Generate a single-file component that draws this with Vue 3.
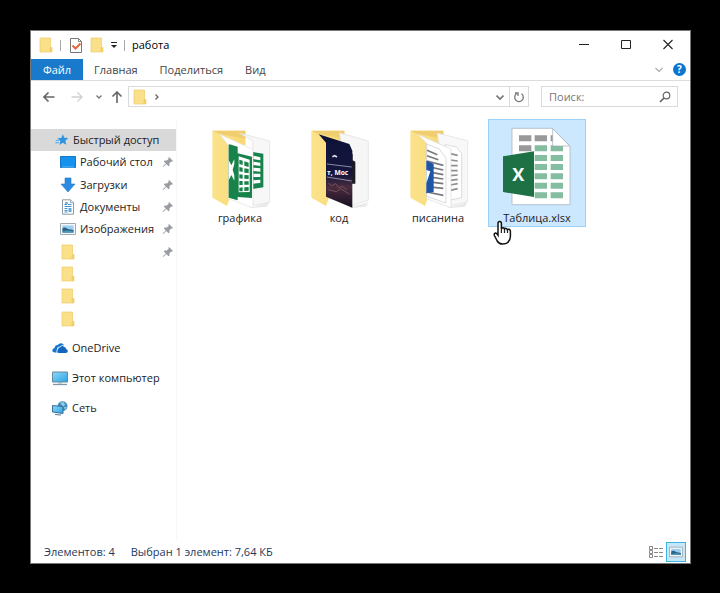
<script setup>
import { ref } from 'vue'

const tabs = ['Главная', 'Поделиться', 'Вид']
const quick = [
  { name: 'Рабочий стол', icon: 'desktop', pinned: true },
  { name: 'Загрузки', icon: 'download', pinned: true },
  { name: 'Документы', icon: 'document', pinned: true },
  { name: 'Изображения', icon: 'picture', pinned: true },
  { name: '', icon: 'folder', pinned: true },
  { name: '', icon: 'folder', pinned: false },
  { name: '', icon: 'folder', pinned: false },
  { name: '', icon: 'folder', pinned: false }
]
const roots = [
  { name: 'OneDrive', icon: 'cloud' },
  { name: 'Этот компьютер', icon: 'computer' },
  { name: 'Сеть', icon: 'network' }
]
const files = [
  { name: 'графика', icon: 'f-sheets' },
  { name: 'код', icon: 'f-code', mark: { text: 'т, Мос', x: 131, y: 164, size: 20 } },
  { name: 'писанина', icon: 'f-docs' },
  { name: 'Таблица.xlsx', icon: 'xlsx', mark: { text: 'X', x: 79, y: 182, size: 54 } }
]
const selected = ref(3)
const query = ref('')
</script>

<template>
  <svg class="sprite" aria-hidden="true">
    <defs>
      <linearGradient id="gold" x1="0" y1="0" x2="1" y2="0">
        <stop offset="0" stop-color="#fbe38d" /><stop offset="1" stop-color="#f8d873" />
      </linearGradient>
      <linearGradient id="night" x1="0" y1="0" x2="0" y2="1">
        <stop offset="0" stop-color="#0d1138" /><stop offset="0.55" stop-color="#15163d" />
        <stop offset="0.72" stop-color="#4a2c3f" /><stop offset="1" stop-color="#150f20" />
      </linearGradient>
      <linearGradient id="screen" x1="0" y1="0" x2="1" y2="1">
        <stop offset="0" stop-color="#8ed8f8" /><stop offset="1" stop-color="#2ba3e4" />
      </linearGradient>
    </defs>
    <symbol id="folder" viewBox="0 0 16 16">
      <path d="M2 1h10.500v9.500H14V15H2z" fill="#fbe08a" stroke="#edcb69" stroke-width=".7" />
      <path d="M12.500 1v9l-1 1v4H14v-4.500h-1.500z" fill="#f2cd68" />
    </symbol>
    <symbol id="star" viewBox="0 0 16 16">
      <path d="M9 1.500l1.700 4 4.500.3-3.400 3 1.100 4.600-4-2.400-3.800 2.600 1-4.700-3.600-2.900 4.600-.4z" fill="#2d93e0" />
      <path d="M1 8.500h4M.5 11h4" stroke="#5aaeea" stroke-width="1.200" />
    </symbol>
    <symbol id="desktop" viewBox="0 0 16 16">
      <path d="M.5 2.500h15v11H.5z" fill="#1592ee" stroke="#1878c4" />
      <path d="M2 13h12" stroke="#62bbfb" />
    </symbol>
    <symbol id="download" viewBox="0 0 16 16">
      <path d="M5 1h6v6h4l-7 8-7-8h4z" fill="#2c8be0" stroke="#2478c8" stroke-width=".6" />
    </symbol>
    <symbol id="document" viewBox="0 0 16 16">
      <path d="M2.500.8h8l3 3v11.400h-11z" fill="#fff" stroke="#8b9aa5" />
      <path d="M10.500.8v3h3" fill="#dce6ec" stroke="#8b9aa5" stroke-width=".8" />
      <path d="M4.500 5.500h2.500M8 5.500h3.500M4.500 7.500h7M4.500 9.500h3M4.500 11.500h3M4.500 13h3" stroke="#3e93cf" />
      <path d="M8.500 9h3v4h-3z" fill="#5ca8dc" /><path d="M5 3h3v2H5z" fill="#73b8e5" />
    </symbol>
    <symbol id="picture" viewBox="0 0 16 16">
      <path d="M.5 2.500h15v11H.5z" fill="#f4f6f7" stroke="#a1aab0" />
      <path d="M2.500 4.500h11v7h-11z" fill="#9bcdf0" /><path d="M2.500 7q3-1.500 5.500 1l5.500 1v2.500h-11z" fill="#2d6285" />
      <path d="M2.500 10.500q5.500-2 11 0v1h-11z" fill="#4b96ba" />
    </symbol>
    <symbol id="cloud" viewBox="0 0 16 16">
      <path d="M5.500 10.500Q6 7.500 8.500 7.300 10 4.800 12.300 7 14 7 14 9q2 .5 1.800 2.300-.3 1.700-1.900 1.700H6.700q-2 0-1.200-2.500z" fill="#1266bd" />
      <path d="M4.800 12.500H2.300Q.2 12 .3 10.200.6 8.300 2.500 8 3 4.800 5.800 4.900 7.200 3 9.300 3.200 11.500 3.500 12 5.500 9.700 4.800 8.300 6.500 5 6.700 4.800 10q-.8 1.200 0 2.500z" fill="#1478cf" />
    </symbol>
    <symbol id="computer" viewBox="0 0 16 16">
      <path d="M.5 2h15v10H.5z" fill="url(#screen)" stroke="#66899e" /><path d="M6 12h4v1.500H6z" fill="#9eb1bc" />
      <path d="M1 14.500h14" stroke="#8298a6" stroke-width="1.300" />
    </symbol>
    <symbol id="network" viewBox="0 0 16 16">
      <circle cx="10.500" cy="6.200" r="5" fill="#468bb9" /><path d="M8 2.500l4-.5 1 3-2 2zM12 7l3 0-2 3z" fill="#8acbe8" />
      <path d="M.5 5.500l10.500 1v7L.5 12z" fill="url(#screen)" stroke="#386e97" /><path d="M3 14.500l6 .5" stroke="#547994" />
    </symbol>
    <symbol id="pin" viewBox="0 0 12 12">
      <path d="M7 1l4 4-1 .8-.8-.3L7.500 7.300v2.200l-1 .8L4.300 8 1.500 10.800l-.8.2.3-.9L3.800 7.400 1.800 5.500l.9-1h2.200l1.800-1.700-.4-.8z" fill="#999da1" />
    </symbol>
    <symbol id="open-folder" viewBox="0 0 270 264">
      <path d="M155 264l62-17-7 13-44 4z" fill="#e9e9e9" />
      <path d="M46 32h99v70L90 258l-44-25z" fill="url(#gold)" />
      <path d="M46 32h99v24L65 41z" fill="#f0ce70" />
    </symbol>
    <symbol id="f-sheets" viewBox="-6 0 270 264">
      <use href="#open-folder" width="270" height="264" />
      <path d="M126 39l92 24v184l-51 9V62z" fill="#f7f7f7" stroke="#dedede" stroke-width="2" />
      <path d="M167 96l32 5v101l-32 5z" fill="#18834d" />
      <path d="M169 107l21 5v9l-21-4zM169 125l21 3v10l-21-3zM169 143l21 2v10l-21-2zM169 161h21v10h-21zM169 181l21-2v10l-21 2z" fill="#fff" />
      <path d="M68 43l100 45v176l-73-28V77z" fill="#fff" stroke="#e1e1e1" stroke-width="2" />
      <path d="M98 73l24 7v20l43 10v124l-43-3v10l-27-8V74z" fill="#178249" />
      <path d="M125 109l33 10v97l-33 1z" fill="#fff" />
      <path d="M127 119l10 3v13l-10-3zm15 5l13 4v13l-13-4zM127 141l10 2v13l-10-2zm15 4l13 2v12l-13-1zM127 163l10 1v12l-10-1zm15 2l13 1v11l-13-1zM127 183h10v12h-10zm15 1h13v10h-13zM127 203l10-1v12h-10zm15-1l13-1v11l-13 1z" fill="#178249" />
      <path d="M95 120l8 16 9-18v14l-5 17 5 17v16l-9-17-8 16z" fill="#fff" />
    </symbol>
    <symbol id="f-code" viewBox="-6 0 270 264">
      <use href="#open-folder" width="270" height="264" />
      <path d="M130 38l87 25v178l-52 16z" fill="#f6f6f6" stroke="#ddd" stroke-width="2" />
      <path d="M160 98l10 4v19l8 4v66h-18z" fill="#1b1b20" />
      <path d="M68 43l92 29 9 20v171l-79-33V68z" fill="url(#night)" />
      <path d="M93 132l74 9M93 171l74 12" stroke="#c5c5d0" stroke-width="2" />
      <path d="M109 110l7-3 7 4" fill="none" stroke="#dcdce8" stroke-width="5" />
      <path d="M97 190l10 7 12-6 9 12 12-4 13 11M97 209l24 6 13-9 27 17" fill="none" stroke="#79505a" stroke-width="3" />
    </symbol>
    <symbol id="f-docs" viewBox="-6 0 270 264">
      <use href="#open-folder" width="270" height="264" />
      <path d="M126 39l92 23v183l-51 12z" fill="#f8f8f8" stroke="#dedede" stroke-width="2" />
      <path d="M150 74l34 7 16 18v134l-38 8z" fill="#fff" stroke="#ccc" stroke-width="2" />
      <path d="M166 101l22 5m-22 14l22 3m-22 14h22m-22 15h22m-22 15l22-2m-22 16l22-3m-22 17l22-4m-22 20l22-5" stroke="#8f8f92" stroke-width="5" />
      <path d="M68 43l100 44v176l-73-27V70z" fill="#fff" stroke="#dadada" stroke-width="2" />
      <path d="M95 72l38 15 20 28v134l-58-20z" fill="#fff" stroke="#c9c9c9" stroke-width="2" />
      <path d="M96 91l31 13m-31 3l34 12m-34 4l49 13m-49 3l49 11m-49 5l49 9m-49 6l49 7m-49 8l49 6m-49 9l49 5m-49 11l49 10" stroke="#77777d" stroke-width="5" />
      <path d="M94 122l22 9v85l-22 4z" fill="#1f55a5" /><path d="M94 150v40l12-36z" fill="#fff" />
    </symbol>
    <symbol id="xlsx" viewBox="24 21 270 264">
      <path d="M84 46h121l53 53v176H84z" fill="#fff" stroke="#9eaab3" stroke-width="2" />
      <path d="M105 67h37v18h-37zm47 0h37v18h-37zm48 0h8v18h-8zM105 97h37v18h-37z" fill="#999" />
      <path d="M152 97h37v18h-37zm48 0h37v18h-37zM152 126h37v18h-37zm48 0h37v18h-37zM152 153h37v18h-37zm48 0h37v18h-37zM152 181h37v18h-37zm48 0h37v18h-37zM152 209h37v18h-37zm48 0h37v18h-37zM152 238h37v18h-37zm48 0h37v18h-37z" fill="#85bda0" />
      <path d="M206 47v52h51z" fill="#fff" stroke="#9eaab3" stroke-width="2" />
      <path d="M57 130l93-15v137l-93-15z" fill="#1d7145" />
    </symbol>
  </svg>

  <div class="backdrop">
    <main class="window">
      <header class="titlebar">
        <svg class="i16"><use href="#folder" /></svg>
        <span class="sep"></span>
        <button class="plain" aria-label="Свойства">
          <svg class="i16" viewBox="0 0 16 16">
            <path d="M2.500 1.500h8l3 3v11h-11z" fill="#fff" stroke="#777" /><path d="M10.500 1.500v3h3" fill="none" stroke="#888" />
            <path d="M4.500 8.500l3 3 5-5" fill="none" stroke="#e2683c" stroke-width="2" />
          </svg>
        </button>
        <button class="plain" aria-label="Новая папка"><svg class="i16"><use href="#folder" /></svg></button>
        <button class="plain" aria-label="Настройка панели">
          <svg class="i8" viewBox="0 0 8 8"><path d="M1 1.500h6" stroke="#222" /><path d="M1 4h6L4 7z" fill="#222" /></svg>
        </button>
        <span class="sep"></span>
        <h1>работа</h1>
        <div class="controls">
          <button class="plain" aria-label="Свернуть"><svg class="i12" viewBox="0 0 12 12"><path d="M1 5.500h10" stroke="#222" /></svg></button>
          <button class="plain" aria-label="Развернуть"><svg class="i12" viewBox="0 0 12 12"><path d="M1.500 1.500h9v8h-9z" fill="none" stroke="#222" /></svg></button>
          <button class="plain" aria-label="Закрыть"><svg class="i12" viewBox="0 0 12 12"><path d="M1.500 1l9 9M10.500 1l-9 9" stroke="#222" stroke-width="1.100" /></svg></button>
        </div>
      </header>

      <nav class="ribbon">
        <button class="tab file">Файл</button>
        <button v-for="t in tabs" :key="t" class="tab">{{ t }}</button>
        <span class="grow"></span>
        <button class="plain" aria-label="Развернуть ленту"><svg class="i8" viewBox="0 0 8 8"><path d="M.5 2L4 5.500 7.500 2" fill="none" stroke="#aaa" stroke-width="1.200" /></svg></button>
        <button class="help" aria-label="Справка">?</button>
      </nav>

      <div class="address">
        <button class="plain" aria-label="Назад"><svg class="i12" viewBox="0 0 12 12"><path d="M11.500 6H1M5.500 1.500L1 6l4.500 4.500" fill="none" stroke="#666" stroke-width="1.600" /></svg></button>
        <button class="plain fwd" aria-label="Вперёд"><svg class="i12" viewBox="0 0 12 12"><path d="M.5 6H11M6.500 1.500L11 6l-4.500 4.500" fill="none" stroke="#d0d0d0" stroke-width="1.300" /></svg></button>
        <button class="plain recent" aria-label="Недавние"><svg class="i8" viewBox="0 0 8 8"><path d="M1.500 2.500L4 5l2.500-2.500" fill="none" stroke="#777" stroke-width="1.300" /></svg></button>
        <button class="plain up" aria-label="Вверх"><svg class="i12" viewBox="0 0 12 12"><path d="M6 12V1M1.500 5.500L6 1l4.500 4.500" fill="none" stroke="#666" stroke-width="1.600" /></svg></button>
        <div class="path">
          <svg class="i16"><use href="#folder" /></svg>
          <svg class="i8" viewBox="0 0 8 8"><path d="M2.500 1.500L5 4 2.500 6.500" fill="none" stroke="#666" stroke-width="1.300" /></svg>
          <span class="grow"></span>
          <button class="plain" aria-label="Прежние расположения"><svg class="i8" viewBox="0 0 8 8"><path d="M.5 2.500L4 6l3.500-3.500" fill="none" stroke="#777" stroke-width="1.700" /></svg></button>
          <button class="plain refresh" aria-label="Обновить">
            <svg class="i12" viewBox="0 0 12 12"><path d="M3.500 2.800a4.300 4.300 0 1 0 5 0M2 2h3v3" fill="none" stroke="#777" stroke-width="1.300" /></svg>
          </button>
        </div>
        <label class="search">
          <input v-model="query" type="text" placeholder="Поиск:" aria-label="Поиск" />
          <svg class="i12" viewBox="0 0 12 12"><circle cx="7.500" cy="4.500" r="3.300" fill="none" stroke="#666" stroke-width="1.200" /><path d="M5 7l-4 4" stroke="#666" stroke-width="1.700" /></svg>
        </label>
      </div>

      <div class="body">
        <aside class="side">
          <div class="quick">
            <a href="#" class="row head"><svg class="i14"><use href="#star" /></svg><span>Быстрый доступ</span></a>
            <a v-for="(q, i) in quick" :key="i" href="#" class="row" :aria-label="q.name || 'Папка'">
              <svg class="i16"><use :href="'#' + q.icon" /></svg>
              <span class="grow">{{ q.name }}</span>
              <svg v-if="q.pinned" class="i12"><use href="#pin" /></svg>
            </a>
          </div>
          <div class="roots">
            <a v-for="r in roots" :key="r.name" href="#" class="root"><svg class="i16"><use :href="'#' + r.icon" /></svg><span>{{ r.name }}</span></a>
          </div>
        </aside>
        <section class="files" aria-label="Файлы">
          <button v-for="(f, i) in files" :key="f.name" class="tile" :class="{ selected: i === selected }" @click="selected = i">
            <svg class="thumb" viewBox="0 0 270 264">
              <use :href="'#' + f.icon" width="270" height="264" />
              <text v-if="f.mark" class="mark" :x="f.mark.x" :y="f.mark.y" :font-size="f.mark.size">{{ f.mark.text }}</text>
            </svg>
            <span>{{ f.name }}</span>
            <svg v-if="i === selected" class="cursor" viewBox="0 0 20 26">
              <path d="M5 13V3.500Q5 1.500 6.700 1.500T8.400 3.500V9q.3-1.300 1.600-1.200 1.300.1 1.500 1.400.4-1 1.600-.8 1.200.2 1.400 1.400.5-.8 1.600-.5 1.300.4 1.300 2v5q0 3.500-2.600 6.200-1.500 1.500-5.300 1.500-3.500 0-5.300-3L1.400 15.500Q.8 13.800 2 13.200q1.300-.5 3 2z" fill="#fff" stroke="#111" stroke-width="1.500" />
              <path d="M8.400 9v4M11.500 9.500V13M14.500 10v3" stroke="#222" stroke-width="1.200" />
            </svg>
          </button>
        </section>
      </div>

      <footer class="status">
        <span>Элементов: 4</span>
        <span>Выбран 1 элемент: 7,64 КБ</span>
        <span class="grow"></span>
        <button class="view" aria-label="Таблица">
          <svg class="i16" viewBox="0 0 16 16"><path d="M1.500 2.500h3v3h-3zM1.500 6.500h3v3h-3zM1.500 10.500h3v3h-3z" fill="none" stroke="#888" /><path d="M6 4.500h4m1 0h4M6 8.500h4m1 0h4M6 12.500h4m1 0h4" stroke="#888" /></svg>
        </button>
        <button class="view active" aria-label="Крупные значки"><svg class="i14"><use href="#picture" /></svg></button>
      </footer>
    </main>
  </div>
</template>

<style>
html,
body {
  background: #000;
}
</style>

<style scoped>
.sprite {
  position: absolute;
  width: 0;
  height: 0;
}
.backdrop {
  box-sizing: border-box;
  display: flex;
  min-height: 100vh;
  padding: 30px 29px 29px 30px;
  font: 11px/16px "Open Sans", "Noto Sans", sans-serif;
  color: #222;
}
.window {
  box-sizing: border-box;
  flex: 1;
  min-width: 0;
  display: flex;
  flex-direction: column;
  background: #fff;
  border: 1px solid #777;
}
button {
  font: inherit;
  color: inherit;
  background: none;
  border: 0;
  padding: 0;
}
a {
  color: inherit;
  text-decoration: none;
}
svg {
  display: block;
  flex: none;
}
.i8 { width: 8px; height: 8px; }
.i12 { width: 12px; height: 12px; }
.i14 { width: 14px; height: 14px; }
.i16 { width: 16px; height: 16px; }
.grow { flex: 1; }

.titlebar {
  display: flex;
  align-items: center;
  gap: 5px;
  height: 28px;
  padding: 0 16px 0 7px;
}
.sep {
  width: 1px;
  height: 11px;
  margin: 0 2px 0 1px;
  background: #aaa;
}
.titlebar h1 {
  margin: 0;
  font-size: 11px;
  font-weight: 400;
  color: #000;
}
.controls {
  display: flex;
  gap: 30px;
  margin-left: auto;
}

.ribbon {
  display: flex;
  align-items: center;
  height: 21px;
  padding-right: 4px;
  border-bottom: 1px solid #dcdddf;
}
.tab {
  height: 21px;
  padding: 0 11px;
  color: #444;
}
.file {
  width: 52px;
  padding: 0;
  background: #1979ca;
  color: #fff;
}
.help {
  width: 13px;
  height: 13px;
  margin-left: 10px;
  border-radius: 50%;
  background: #0b75cf;
  color: #fff;
  font-size: 10px;
  font-weight: 700;
  line-height: 13px;
}

.address {
  display: flex;
  align-items: center;
  padding: 5px 12px 0 12px;
}
.fwd { margin-left: 16px; }
.recent { margin-left: 12px; }
.up { margin-left: 8px; }
.path {
  box-sizing: border-box;
  flex: 1;
  display: flex;
  align-items: center;
  gap: 5px;
  height: 21px;
  margin: 0 12px 0 5px;
  padding-left: 3px;
  border: 1px solid #dadada;
}
.refresh {
  display: flex;
  align-items: center;
  height: 19px;
  padding: 0 3px;
  border-left: 1px solid #dadada;
}
.search {
  box-sizing: border-box;
  display: flex;
  align-items: center;
  width: 137px;
  height: 21px;
  padding: 0 6px 0 7px;
  border: 1px solid #dadada;
}
.search input {
  flex: 1;
  min-width: 0;
  padding: 0;
  border: 0;
  outline: 0;
  font: inherit;
  background: none;
}
.search input::placeholder {
  color: #777;
}

.body {
  flex: 1;
  display: flex;
  padding-top: 12px;
}
.side {
  flex: none;
  width: 145px;
  padding-top: 10px;
  border-right: 1px solid #f7f7f7;
}
.quick {
  display: grid;
  grid-template-rows: repeat(9, 1fr);
  height: 201px;
}
.row {
  display: flex;
  align-items: center;
  gap: 4px;
  padding: 0 2px 0 29px;
}
.head {
  padding-left: 24px;
  background: #d9d9d9;
}
.roots {
  padding-top: 3px;
}
.root {
  display: flex;
  align-items: center;
  gap: 4px;
  height: 30px;
  padding-left: 21px;
}
.files {
  flex: 1;
  display: grid;
  grid-template-columns: repeat(auto-fill, 98px);
  gap: 1px;
  align-content: start;
  padding-left: 14px;
}
.tile {
  box-sizing: border-box;
  position: relative;
  display: flex;
  flex-direction: column;
  align-items: center;
  gap: 2px;
  height: 108px;
  border: 1px solid transparent;
}
.selected {
  background: #cce8ff;
  border-color: #9bd0fa;
}
.thumb {
  width: 90px;
  height: 88px;
}
.mark {
  font-weight: 700;
  text-anchor: middle;
  fill: #fff;
}
.cursor {
  position: absolute;
  left: 4px;
  top: 100px;
  width: 20px;
  height: 26px;
}
.status {
  display: flex;
  align-items: center;
  height: 22px;
  padding: 0 4px 0 13px;
  color: #1e395b;
}
.status span + span {
  margin-left: 16px;
}
.view {
  display: flex;
  align-items: center;
  justify-content: center;
  box-sizing: border-box;
  width: 20px;
  height: 20px;
}
.active {
  background: #c4e7f9;
  border: 1px solid #3fb1e3;
}
</style>
